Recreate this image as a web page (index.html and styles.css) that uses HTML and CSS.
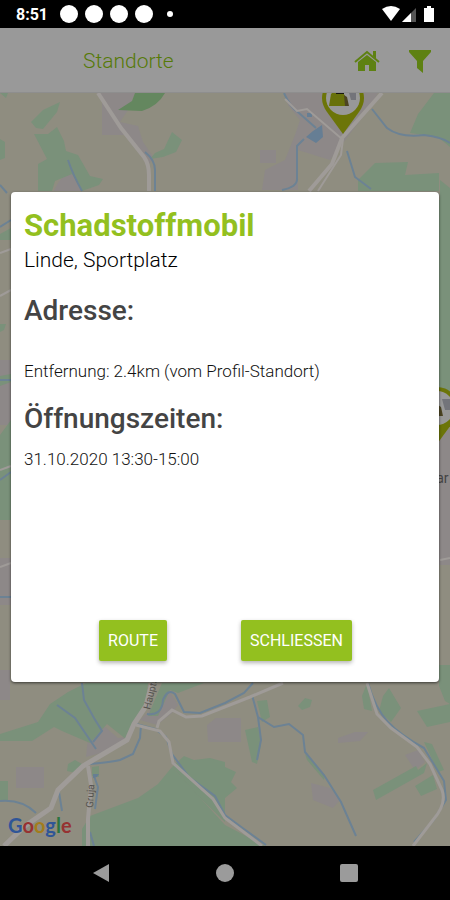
FILE: index.html
```html
<!DOCTYPE html>
<html lang="de">
<head>
    <meta charset="UTF-8">
    <meta name="viewport" content="width=device-width, initial-scale=1.0">
    <title>Standorte</title>
    <link rel="stylesheet" href="styles.css">
</head>
<body>
    <div class="status-bar">
        <span class="clock">8:51</span>
        <div class="notifications">
            <span class="dot"></span>
            <span class="dot"></span>
            <span class="dot"></span>
            <span class="dot"></span>
        </div>
        <span class="dot small"></span>
        <svg class="status-icons" viewBox="0 0 54 18" aria-hidden="true">
            <path d="M0 4 Q9 -2 18 4 L9 16Z" fill="#fff"/>
            <path d="M20 17 L34 3 V17Z" fill="#555"/>
            <path d="M20 17 L29 8 V17Z" fill="#fff"/>
            <path d="M42 3 H45 V1 H49 V3 H52 V17 H42Z" fill="#fff"/>
        </svg>
    </div>

    <div class="screen">
        <header class="toolbar">
            <h1>Standorte</h1>
            <button class="icon-btn" aria-label="Startseite">
                <svg width="26" height="22" viewBox="0 0 26 22" aria-hidden="true">
                    <path d="M1 12 L13 2 L25 12" fill="none" stroke="#5e8112" stroke-width="2"/>
                    <path d="M19 1 H22 V9 L19 6Z" fill="#5e8112"/>
                    <path d="M4 12 L13 5 L22 12 V21 H15 V15 H11 V21 H4Z" fill="#5e8112"/>
                </svg>
            </button>
            <button class="icon-btn" aria-label="Filter">
                <svg width="24" height="24" viewBox="0 0 24 24" aria-hidden="true">
                    <path d="M1 1 H23 V3 L15 12 V24 L9 19 V12 L1 3Z" fill="#5e8112"/>
                </svg>
            </button>
        </header>

        <div class="map">
            <svg class="map-tiles" viewBox="0 93 450 753" preserveAspectRatio="xMidYMid slice" aria-hidden="true">
                <!-- settlements -->
                <g fill="#8d8888">
                    <path d="M97 93 H135 L128 110 L120 122 L138 126 L143 142 L154 158 L148 165 L126 135 H102 V98Z"/>
                    <path d="M54 191 Q62 172 74 174 Q80 180 81 191Z"/>
                    <path d="M285 93 H378 L368 110 L330 160 L298 150 V190 H262 L265 170 L285 160 L295 135 L300 120 L288 105Z"/>
                    <path d="M260 150 H276 V163 H260Z M0 360 H11 V425 H0Z M0 558 H11 V605 H0Z M0 670 H10 V700 H0Z"/>
                    <path d="M16 767 H44 V788 H16Z M88 738 L105 727 L118 738 L128 737 L105 752 L86 757Z"/>
                    <path d="M160 700 L170 692 L178 705 L172 713 L157 725 L140 720Z M207 725 L216 718 H241 V742 H208Z"/>
                    <path d="M338 738 L355 732 H368 L360 741 L338 743Z M311 783 L330 788 L340 800 L333 808 L313 800Z M405 755 L418 750 L425 762 L415 770Z"/>
                    <path d="M438 430 H450 V565 H438Z"/>
                </g>
                <!-- woods -->
                <g fill="#7a917a">
                    <path d="M60 102 L57 112 L43 129 L36 128 L31 122 L43 110Z"/>
                    <path d="M34 134 L48 134 L57 127 L64 141 L66 151 L78 155 L90 176 L103 179 L99 185 L82 191 L72 174 L55 181 L52 191 H38 V164 L47 159Z"/>
                    <path d="M172 132 L182 140 L176 152 L163 157 L150 159 L155 153 L164 149Z"/>
                    <path d="M0 139 L5 142 V158 L0 160Z M0 93 H8 L6 98Z"/>
                    <path d="M434 93 H450 V147 L438 137 L410 133 L418 114Z"/>
                    <path d="M358 180 L375 163 L408 162 L405 175 L439 173 V191 H358Z M440 180 L450 188 V205 H440Z"/>
                    <path d="M0 234 L11 228 V240 H0Z M0 324 L6 324 L4 330 L0 332Z M0 376 L11 374 V382 L0 386Z M0 435 L11 420 V520 H0Z"/>
                    <path d="M439 200 H450 V405 H439Z M439 665 H450 V704 L445 701 L439 686Z"/>
                    <path d="M86 683 H148 L145 708 L134 724 L127 740 L107 724 L90 743 L62 731 L54 727 L32 741 H0 V734 L38 722 L50 704 L68 692Z"/>
                    <path d="M162 683 H204 L178 693 L170 690 L158 716 L148 716Z M68 764 L75 760 L82 764 L76 773 L67 771Z M92 767 L99 766 V777 L92 776Z"/>
                    <path d="M172 767 L197 795 L225 822 V762 L210 758 L194 760 L184 756Z"/>
                    <path d="M172 767 L225 825 L265 846 H82 V829 L90 816 L138 798 L158 784Z"/>
                    <path d="M225 767 L236 772 L231 782 L237 788 L225 798Z M0 781 H8 V801 H0Z"/>
                    <path d="M257 701 L267 700 L270 717 L262 722Z M245 730 L258 727 L261 745 L257 764 L252 762Z M298 706 L305 698 L312 700 L310 707 L302 710Z"/>
                    <path d="M367 683 L372 711 L364 709 L362 696Z M389 688 L401 708 L391 722 L379 711 L383 696Z M417 711 L450 704 V722 L427 727Z"/>
                    <path d="M373 790 L416 766 L418 770 L427 763 L424 773 L376 800Z M415 786 L433 775 L437 789 L421 796Z M424 742 L432 744 L444 770 L438 772Z"/>
                    <path d="M305 754 L325 775 L324 780 L307 760Z"/>
                </g>
                <path fill="#64875f" d="M135 93 H165 Q158 106 142 111 L118 110 L132 101Z"/>
                <!-- rivers -->
                <g fill="none" stroke="#6c8294" stroke-width="2">
                    <path d="M68 160 Q73 175 82 191 M0 185 L7 193 M145 152 Q155 160 155 170 V191"/>
                    <path d="M284 93 Q290 107 299 113 L316 128 M304 139 L297 146 V178 Q298 187 282 190"/>
                    <path d="M372 109 L387 128 Q400 138 424 135 Q442 137 450 143 M347 151 L355 177 L371 189"/>
                    <path d="M0 227 L11 220 M0 380 H11 M0 480 L11 472 M0 597 H11"/>
                    <path d="M82 683 L84 700 L94 718 L102 731 L93 742 M57 705 L75 718 L96 749"/>
                    <path d="M90 764 Q112 762 120 760 L133 754 L140 738 L141 725 M147 714 Q162 716 163 700 Q168 688 175 694 L184 712 L200 713 L225 703 L244 693 L253 683"/>
                    <path d="M136 724 L155 729 L166 737 L172 754 L189 777 L215 796 L225 815 L244 829 L266 845"/>
                    <path d="M252 695 L258 717 L274 727 L289 724 L303 735 L305 752 L324 775 L341 802 L356 836 M258 717 L261 740 L257 760"/>
                    <path d="M368 683 Q375 708 388 722 Q400 735 424 748 L444 781 L446 800 L433 821 L414 842"/>
                    <path d="M0 801 Q22 799 36 813 M59 792 L62 811 M94 776 L98 787 L95 809 M90 832 L94 846"/>
                </g>
                <path fill="#667e94" d="M306 137 L313 131 L322 125 L323 137 L316 143Z M307 113 H312 V117 H307Z M93 774 L99 774 L97 777 L93 778Z"/>
                <!-- roads -->
                <g fill="none" stroke="#9f9b98">
                    <path stroke-width="4" d="M98 93 L121 128 L144 157 Q149 164 149 175 V191"/>
                    <path stroke-width="4" d="M382 93 L342 138 L332 164 L309 191"/>
                    <path stroke-width="2" d="M342 139 L307 109 L297 111 L285 99 M343 139 L341 155 L318 191"/>
                    <path stroke-width="5" d="M152 683 L146 706 L134 724 L127 740 L83 766 L58 790 L51 808 L25 826 L4 846"/>
                    <path stroke-width="4" d="M88 766 L91 785 L88 819 V846"/>
                    <path stroke-width="3" d="M136 725 L160 731 L169 742 L173 763 L213 799 L225 818 L262 846 M157 728 L159 721 L172 710 L186 717 L202 716 L250 697 L283 683"/>
                    <path stroke-width="3" d="M367 683 L377 714 L391 728 L417 747 L430 764 L442 790 Q447 804 433 820 L413 846"/>
                    <path stroke-width="2" d="M0 253 L11 249 M0 296 L11 290 M0 470 L11 466 M0 567 L11 563 M440 560 L450 558"/>
                </g>
                <g class="map-label">
                    <text transform="translate(150 710) rotate(-76)">Hauptstr.</text>
                    <text transform="translate(93 808) rotate(-87)">Gruja</text>
                </g>
                <text class="place-label" x="424" y="483">Mar</text>
                <!-- markers -->
                <defs>
                    <g id="pin">
                        <path d="M0 36 L-16 14 Q-21 7 -21 0 A21 21 0 1 1 21 0 Q21 7 16 14Z" fill="#6c7508"/>
                        <circle r="17" fill="#989898"/>
                        <path d="M-14 8 L-12 -4 Q-6 -10 1 -4 L5 8Z" fill="#68710a"/>
                        <path d="M1 -3 L4 -1 L6 8 H2Z" fill="#4c4422"/>
                        <path d="M5 -9 H13 V2 H8Z" fill="#73747a"/>
                        <path d="M-7 -7 H1 V-4 H-7Z" fill="#17170d"/>
                    </g>
                </defs>
                <use href="#pin" x="343" y="98"/>
                <use href="#pin" x="437" y="408"/>
            </svg>
            <a class="google" href="#" aria-label="Google"><span class="blue">G</span><span class="red">o</span><span class="yellow">o</span><span class="blue">g</span><span class="green">l</span><span class="red">e</span></a>
        </div>

        <div class="modal-wrap">
            <section class="modal" role="dialog" aria-labelledby="modalTitle">
                <h2 class="modal-title" id="modalTitle">Schadstoffmobil</h2>
                <p class="modal-place">Linde, Sportplatz</p>
                <h3>Adresse:</h3>
                <p class="detail distance">Entfernung: 2.4km (vom Profil-Standort)</p>
                <h3>Öffnungszeiten:</h3>
                <p class="detail">31.10.2020 13:30-15:00</p>
                <div class="modal-actions">
                    <button class="btn">ROUTE</button>
                    <button class="btn">SCHLIESSEN</button>
                </div>
            </section>
        </div>
    </div>

    <nav class="nav-bar">
        <button class="nav-btn" aria-label="Zurück">
            <svg width="20" height="20" viewBox="0 0 20 20"><path d="M2 10 L18 1 V19Z"/></svg>
        </button>
        <button class="nav-btn" aria-label="Home">
            <svg width="20" height="20" viewBox="0 0 20 20"><circle cx="10" cy="10" r="9"/></svg>
        </button>
        <button class="nav-btn" aria-label="Übersicht">
            <svg width="20" height="20" viewBox="0 0 20 20"><rect x="1" y="1" width="18" height="18" rx="2"/></svg>
        </button>
    </nav>
</body>
</html>
```
FILE: styles.css
```css
* {
    margin: 0;
    padding: 0;
    box-sizing: border-box;
}

body {
    display: flex;
    flex-direction: column;
    min-height: 100vh;
    font-family: Roboto, sans-serif;
    background-color: #000;
}

button {
    border: none;
    background: none;
    font-family: inherit;
    cursor: pointer;
}

svg {
    display: block;
}

/* Status bar */
.status-bar {
    display: flex;
    align-items: center;
    height: 28px;
    padding: 0 14px 0 16px;
    color: #fff;
}

.clock {
    font-size: 16px;
    font-weight: 700;
    margin-right: 12px;
}

.notifications {
    display: flex;
    gap: 7px;
}

.dot {
    width: 18px;
    height: 18px;
    border-radius: 50%;
    background-color: #fff;
}

.dot.small {
    width: 6px;
    height: 6px;
    margin-left: 14px;
}

.status-icons {
    width: 54px;
    height: 18px;
    margin-left: auto;
}

/* Screen */
.screen {
    position: relative;
    flex: 1;
    display: flex;
    flex-direction: column;
}

.toolbar {
    display: flex;
    align-items: center;
    gap: 28px;
    height: 65px;
    padding: 2px 18px 0 83px;
    background-color: #999;
    border-bottom: 1px solid #8e8e8e;
}

.toolbar h1 {
    flex: 1;
    font-size: 21px;
    font-weight: 300;
    color: #567a08;
}

.map {
    position: relative;
    flex: 1;
    overflow: hidden;
    background-color: #8f8d80;
}

.map-tiles {
    position: absolute;
    width: 100%;
    height: 100%;
}

.map-label {
    font-size: 10px;
    fill: #55534f;
}

.place-label {
    font-size: 14px;
    fill: #444;
}

.google {
    position: absolute;
    left: 8px;
    bottom: 9px;
    font-family: Lato, sans-serif;
    font-size: 20px;
    font-weight: 700;
    line-height: 24px;
    text-decoration: none;
}

.blue {
    color: #2f5597;
}

.red {
    color: #963232;
}

.yellow {
    color: #a37c1c;
}

.green {
    color: #2c7440;
}

/* Modal */
.modal-wrap {
    position: absolute;
    inset: 0;
    display: flex;
    align-items: center;
    justify-content: center;
    padding: 0 11px;
}

.modal {
    display: flex;
    flex-direction: column;
    width: 100%;
    min-height: 60%;
    padding: 15px 12px 21px 13px;
    background-color: #fff;
    border-radius: 4px;
    box-shadow: 0 1px 3px rgba(0,0,0,0.6);
}

.modal-title {
    font-size: 31px;
    font-weight: 700;
    line-height: 38px;
    color: #93c01f;
}

.modal-place {
    font-size: 21px;
    font-weight: 300;
    line-height: 30px;
    color: #000;
}

.modal h3 {
    margin-top: 19px;
    font-size: 28px;
    font-weight: 500;
    line-height: 34px;
    color: #444;
}

.detail {
    margin-top: 11px;
    font-size: 17px;
    font-weight: 300;
    line-height: 24px;
    color: #111;
}

.detail.distance {
    margin-top: 31px;
}

.modal-actions {
    display: flex;
    justify-content: center;
    gap: 74px;
    margin-top: auto;
}

.btn {
    height: 41px;
    padding: 0 9px;
    font-size: 16px;
    color: #fff;
    background-color: #93c01f;
    border-radius: 2px;
    box-shadow: 0 2px 4px rgba(0,0,0,0.3);
}

/* Navigation bar */
.nav-bar {
    display: flex;
    justify-content: center;
    gap: 104px;
    height: 54px;
}

.nav-btn svg {
    fill: #9b9b9b;
}
```
